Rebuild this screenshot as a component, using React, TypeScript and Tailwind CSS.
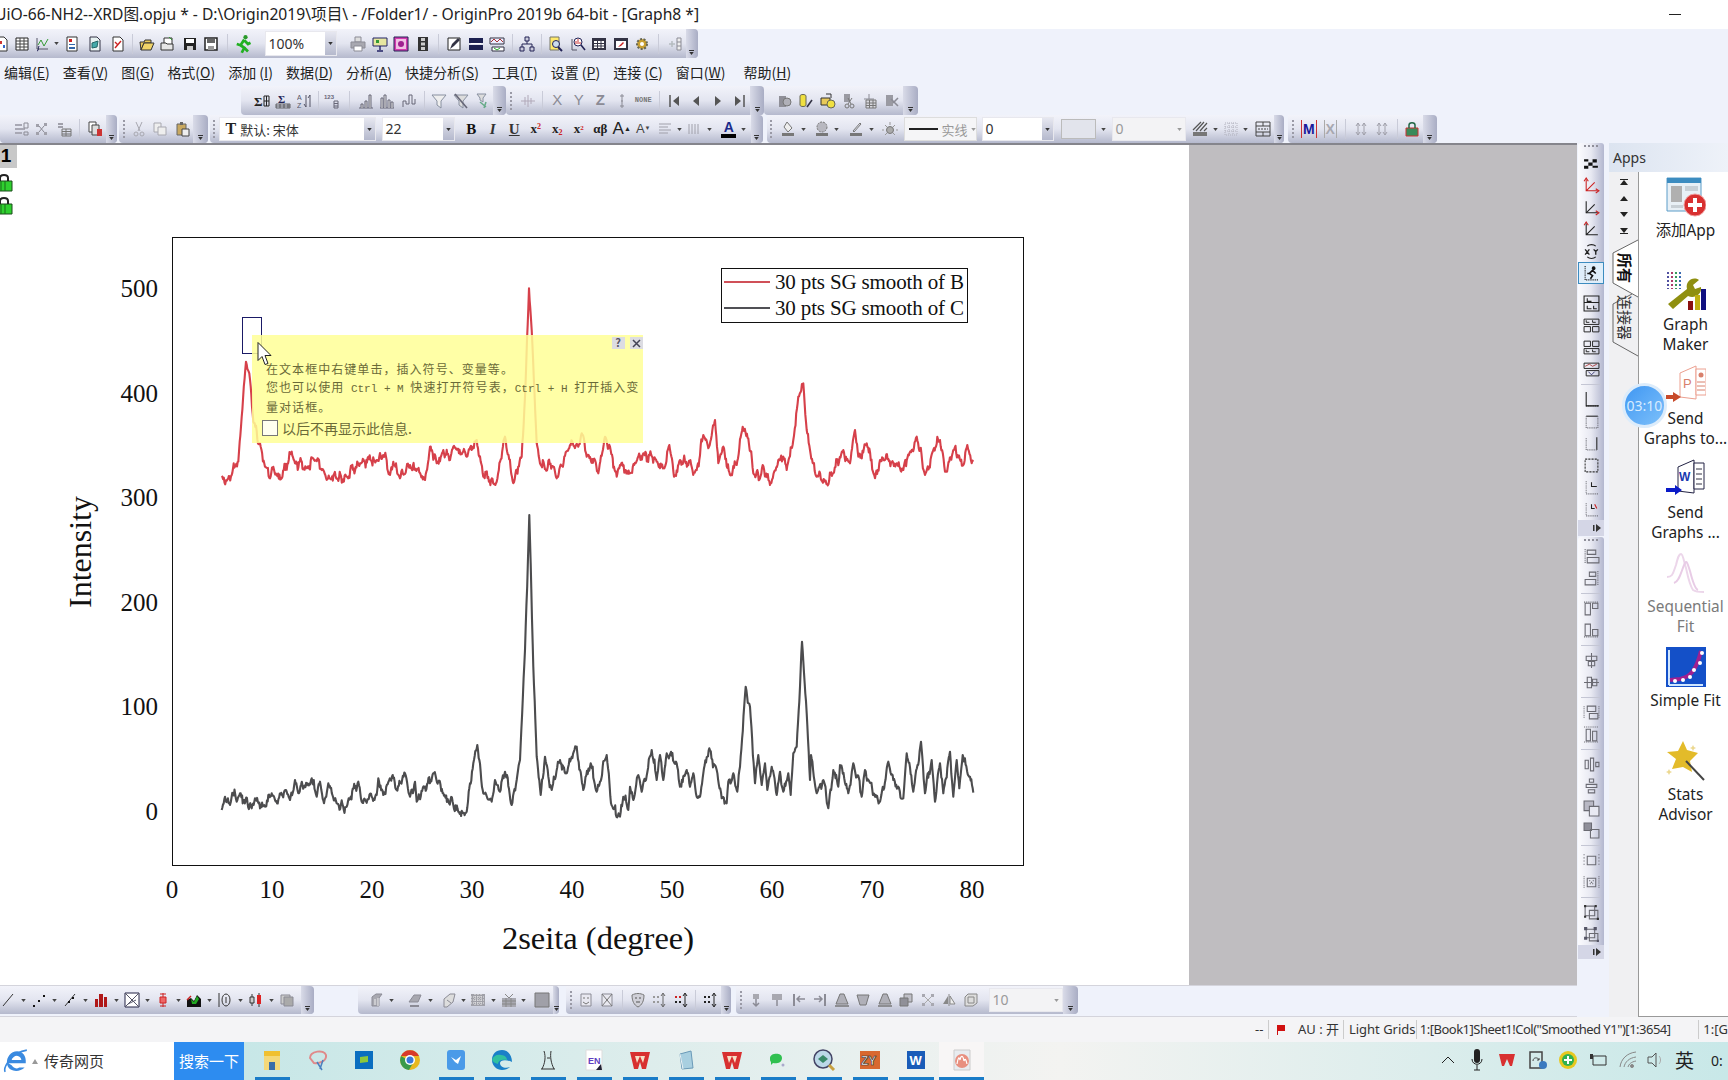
import React from 'react';

// rough trace of the two curves, read off the screenshot (zoomed crop coords)
const redA = [[185,738],[200,752],[215,735],[235,695],[245,560],[258,395],[268,430],[280,575],[300,640],[315,710],[330,745],[340,710],[350,735],[365,745],[395,665],[405,700],[440,715],[460,685],[490,720],[510,745],[560,740],[600,700],[650,690],[670,675],[690,735],[700,695],[720,745],[750,705],[795,750],[810,650],[830,700],[850,660],[870,690],[880,650],[920,680],[950,630],[970,740],[1010,755],[1035,620],[1060,760],[1085,680],[1095,500],[1107,175],[1115,300],[1130,640],[1140,700],[1180,710],[1190,745]];
const redB = [[0,710],[30,645],[55,650],[65,610],[80,680],[105,690],[115,730],[135,620],[150,650],[170,740],[180,705],[210,730],[250,670],[290,695],[315,710],[328,645],[342,740],[360,690],[410,720],[430,615],[445,655],[465,570],[475,700],[490,650],[510,735],[530,705],[548,590],[565,625],[580,730],[600,745],[608,705],[630,765],[655,690],[670,680],[680,720],[700,630],[715,500],[730,460],[740,600],[750,660],[770,740],[795,755],[820,730],[850,660],[870,700],[885,600],[895,680],[920,640],[945,745],[960,690],[1010,700],[1030,720],[1070,620],[1095,735],[1120,660],[1140,630],[1155,725],[1180,660],[1210,705],[1222,645],[1235,700],[1240,695]];
const blackA = [[65,930],[75,890],[90,915],[97,878],[110,905],[120,880],[155,925],[165,895],[195,920],[215,880],[225,900],[260,875],[270,900],[285,840],[295,880],[335,835],[350,890],[360,845],[372,910],[385,850],[410,910],[440,920],[475,845],[485,905],[530,885],[535,835],[550,885],[578,825],[590,870],[615,820],[630,890],[645,845],[650,905],[700,820],[730,880],[775,935],[800,935],[820,790],[832,735],[850,880],[875,905],[885,840],[900,875],[915,815],[935,915],[950,840],[960,780],[975,450],[988,45],[1000,500],[1010,770],[1022,885],[1035,770],[1055,870],[1080,780],[1100,820],[1130,740],[1150,870],[1172,790],[1190,875]];
const blackB = [[0,545],[20,465],[33,610],[60,650],[70,590],[85,630],[90,560],[100,600],[115,525],[125,575],[155,450],[170,540],[180,465],[190,540],[200,460],[230,490],[240,560],[260,510],[270,560],[280,520],[290,590],[300,590],[310,520],[328,445],[350,510],[365,595],[380,610],[385,545],[400,520],[412,575],[420,500],[437,260],[450,320],[465,550],[475,465],[485,555],[495,490],[502,570],[515,500],[530,585],[540,515],[550,575],[565,520],[572,585],[580,460],[590,440],[606,125],[620,340],[630,540],[633,465],[650,580],[670,540],[685,625],[700,510],[715,560],[720,495],[745,580],[760,490],[785,590],[795,510],[825,590],[840,605],[865,485],[880,540],[910,595],[920,460],[940,575],[963,425],[975,580],[995,480],[1005,605],[1020,490],[1030,580],[1050,455],[1060,590],[1070,480],[1078,565],[1088,465],[1110,530],[1120,578]];

const place = (pts: number[][], ox: number, oy: number) => pts.map(([x, y]) => [ox + x / 3, oy + y / 3]);

const curve = (pts: number[][], seed: number) => {
  let s = seed;
  const rnd = () => {
    s = (s * 9301 + 49297) % 233280;
    return s / 233280 - 0.5;
  };
  let d = `M${pts[0][0]} ${pts[0][1]}`;
  let px = 0;
  for (let i = 1; i < pts.length; i++) {
    const [x0, y0] = pts[i - 1];
    const [x1, y1] = pts[i];
    const n = Math.max(1, Math.round((x1 - x0) / 0.7));
    for (let k = 1; k <= n; k++) {
      const t = k / n;
      px += 0.7;
      // noise fades out at the traced points so the peak heights stay put
      const fade = Math.min(1, Math.min(k, n - k) / 3);
      const wob = Math.sin(px * 1.1 + seed) * 3 + Math.sin(px * 0.37) * 2;
      const y = y0 + (y1 - y0) * t + (wob + rnd() * 7) * fade;
      d += `L${(x0 + (x1 - x0) * t).toFixed(1)} ${y.toFixed(1)}`;
    }
  }
  return d;
};

const redPath = curve([...place(redA, 160, 230), ...place(redB, 560, 230)], 17);
const blackPath = curve([...place(blackA, 200, 500), ...place(blackB, 600, 600)], 91);

const Svg = ({ children, c = 'h-4 w-4' }: { children: React.ReactNode; c?: string }) => (
  <svg viewBox="0 0 16 16" className={c} fill="none" strokeWidth="1">{children}</svg>
);

const gray = '#8b8b95';

const G: Record<string, React.ReactNode> = {
  doc: <Svg><path d="M3 1h7l3 3v11H3z" fill="#fff" stroke="#333" /><path d="M5 5h3v3H5z" fill="#c33" /><path d="M9 9h2v3H9z" fill="#36c" /></Svg>,
  sheet: <Svg><path d="M2 2h12v12H2z" fill="#fff" stroke="#222" /><path d="M2 5h12M2 8h12M2 11h12M6 2v12M10 2v12" stroke="#444" /></Svg>,
  chartf: <Svg><path d="M3 2v11h11" stroke="#556" /><path d="M4 9l3-5 3 6 4-7" stroke="#393" /><path d="M3 15c2 0 1-4 2-5" stroke="#225" /></Svg>,
  book: <Svg><path d="M3 1h10v14H3z" fill="#fff" stroke="#333" /><path d="M5 3h3v3H5z" fill="#c22" /><path d="M5 8h6v1H5zM5 11h6v2H5z" fill="#36a" /></Svg>,
  note: <Svg><path d="M3 1h7l3 3v11H3z" fill="#e8f2f2" stroke="#334" /><path d="M5 7l6-2-1 6-5 1z" fill="#4aa" stroke="#266" /></Svg>,
  layout: <Svg><path d="M3 1h7l3 3v11H3z" fill="#fff" stroke="#333" /><path d="M5 12l6-7M5 6l3 3" stroke="#c22" strokeWidth="1.4" /></Svg>,
  open: <Svg><path d="M1 6h4l1-2h6v3H5l-3 7z" fill="#e8c95a" stroke="#333" /><path d="M2 14l3-7h10l-3 7z" fill="#f0d468" stroke="#333" /></Svg>,
  folder2: <Svg><path d="M4 2h8v8H4z" fill="#fff" stroke="#333" /><path d="M1 7h5l1 1h6v6H1z" fill="#e6e6e6" stroke="#333" /><path d="M9 1l3 3" stroke="#393" /></Svg>,
  save: <Svg><path d="M2 2h12v12H2z" fill="#222" /><path d="M4 3h8v4H4z" fill="#fff" /><path d="M5 10h6v4H5z" fill="#ccc" /></Svg>,
  saveas: <Svg><path d="M2 2h12v12H2z" fill="#fff" stroke="#222" strokeWidth="1.5" /><path d="M4 3h8v4H4z" fill="#666" /><path d="M5 10h6v4H5z" fill="#999" /></Svg>,
  run: <Svg c="h-5 w-5"><circle cx="10" cy="2.5" r="1.7" fill="#2a9a2a" /><path d="M9 4.5L6 9l3 2-2 4M9 5l3 3 2-1M6 9L3 8M9 11l3 3" stroke="#22b022" strokeWidth="2.2" /></Svg>,
  print: <Svg><path d="M5 1h6v5H5z" fill="#ddd" stroke={gray} /><path d="M1 6h14v6H1z" fill="#a8a8b0" stroke={gray} /><path d="M4 10h8v5H4z" fill="#fff" stroke={gray} /></Svg>,
  screen: <Svg><path d="M1 2h14v8H1z" fill="#e6e6a0" stroke="#226" /><path d="M4 4h3v3H4z" fill="#393" /><path d="M8 10v4M5 15h6" stroke="#226" strokeWidth="1.4" /></Svg>,
  pink: <Svg><path d="M1 1h14v14H1z" fill="#d43ab0" stroke="#225" /><path d="M3 3h10v10H3z" fill="#f0c0e4" /><circle cx="8" cy="8" r="3" fill="#a02090" /></Svg>,
  film: <Svg><path d="M3 1h10v14H3z" fill="#333" /><path d="M6 2h4v3H6zM6 6.500h4v3H6zM6 11h4v3H6z" fill="#ccc" /></Svg>,
  pen: <Svg><path d="M2 2h12v12H2z" fill="#fff" stroke="#222" /><path d="M4 13l2-5 6-6 2 2-6 6z" fill="#334" /></Svg>,
  bars2: <Svg><path d="M1 2h14v5H1zM1 9h14v5H1z" fill="#1c2050" /><path d="M3 7.500h10" stroke="#fff" /></Svg>,
  wins: <Svg><path d="M1 2h14v6H1z" fill="#eef" stroke="#334" /><path d="M3 11h12v4H3z" fill="#fff" stroke="#334" /><path d="M2 6l3-3 3 3 3-3 3 3" stroke="#a33" /><path d="M5 12l3 2 3-2" stroke="#2a2" /></Svg>,
  tree: <Svg><path d="M6 1h4v4H6zM1 11h4v4H1zM11 11h4v4h-4z" fill="#ccd" stroke="#225" /><path d="M8 5v3M3 11V8h10v3" stroke="#225" /></Svg>,
  mag: <Svg><path d="M2 1h9v13H2z" fill="#ffe96a" stroke="#776" /><circle cx="8" cy="8" r="3.500" fill="#cde" stroke="#225" /><path d="M10 11l4 4" stroke="#225" strokeWidth="2" /></Svg>,
  magc: <Svg><path d="M2 14V3M2 14h5" stroke="#556" /><circle cx="8" cy="6" r="4" fill="#fff" stroke="#225" /><path d="M6 8V5M8 8V3M10 8V6" stroke="#c33" /><path d="M11 9l4 5" stroke="#225" strokeWidth="1.6" /></Svg>,
  table: <Svg><path d="M1 2h14v12H1z" fill="#334" /><path d="M3 5h10v7H3z" fill="#fff" /><path d="M3 7.500h10M3 10h10M6.500 5v7M10 5v7" stroke="#334" /></Svg>,
  tablep: <Svg><path d="M1 2h14v12H1z" fill="#334" /><path d="M3 5h10v7H3z" fill="#fff" /><path d="M5 11l2-2 3-3 1 1-3 3z" fill="#c22" /></Svg>,
  gear: <Svg><circle cx="8" cy="8" r="5" fill="#c9a030" stroke="#665" strokeWidth="2" strokeDasharray="2 1.500" /><circle cx="8" cy="8" r="2" fill="#fff" /></Svg>,
  addcol: <Svg><path d="M10 2h4v12h-4z" fill="#eee" stroke={gray} /><path d="M10 6h4M10 10h4" stroke={gray} /><path d="M2 8h6M5 5v6" stroke="#b5bcc0" strokeWidth="1.5" /></Svg>,
  sigmac: <Svg><text x="0" y="13" fontFamily="Liberation Serif" fontSize="13" fontWeight="700" fill="#222">Σ</text><path d="M10 3h5v10h-5zM10 8h5M12.500 3v10" stroke="#222" /></Svg>,
  sigmau: <Svg><text x="3" y="10" fontFamily="Liberation Serif" fontSize="11" fontWeight="700" fill="#225">Σ</text><path d="M1 11h14v4H1zM1 13h14M5 11v4M9 11v4M13 11v4" stroke="#333" strokeWidth=".7" /></Svg>,
  sort: <Svg><text x="0" y="7" fontFamily="Liberation Sans" fontSize="7" fill="#556">A</text><text x="0" y="15" fontFamily="Liberation Sans" fontSize="7" fill="#556">Z</text><path d="M9 2v12M9 14l-2-3M13 14V2M13 2l-2 3" stroke="#556" /></Svg>,
  n123: <Svg><text x="0" y="6" fontFamily="Liberation Sans" fontSize="6" fontWeight="700" fill="#667">123</text><path d="M10 8h4v7h-4zM10 10.500h4M10 13h4" stroke="#667" /></Svg>,
  bar: <Svg><path d="M1 15h14" stroke="#667" /><path d="M3 15v-4h2v4M7 15V8h2v7M11 15V2h2v13" stroke="#667" fill="#ddd" /></Svg>,
  bars: <Svg><path d="M1 15h14" stroke="#667" /><path d="M2 15V5h2v10M5 15V2h2v13M9 15V7h2v8M12 15V9h2v6" stroke="#667" fill="#eee" /></Svg>,
  steps: <Svg><path d="M2 14V8h3v3h3V2h3v9h3V6" stroke="#667" /></Svg>,
  fun: <Svg><path d="M1 2h14l-5 6v7l-4-3V8z" fill="#eee" stroke="#8890a0" /></Svg>,
  funx: <Svg><path d="M1 2h14l-5 6v7l-4-3V8z" fill="#ddd" stroke="#8890a0" /><path d="M2 1l12 14" stroke="#667" strokeWidth="1.6" /></Svg>,
  funy: <Svg><path d="M3 1h9l-3 4v4l-3-2V5z" fill="#ddd" stroke="#8890a0" /><path d="M6 9l6 5M12 9l-2 6" stroke="#6a8" strokeWidth="1.5" /></Svg>,
  spark: <Svg><path d="M1 8h14M5 4v8M8 2v12M11 5v6" stroke="#b0a8b8" /></Svg>,
  X: <span className="font-['Liberation_Sans',sans-serif] text-[15px] text-[#8b8b95]">X</span>,
  Y: <span className="font-['Liberation_Sans',sans-serif] text-[15px] text-[#8b8b95]">Y</span>,
  Z: <span className="font-['Liberation_Sans',sans-serif] text-[15px] font-bold text-[#8b8b95]">Z</span>,
  ibar: <Svg><path d="M8 1v14M6 3h4M6 13h4M7 8h2" stroke="#8b8b95" /></Svg>,
  none: <span className="font-['Liberation_Mono',monospace] text-[7px] font-bold text-[#777]">NONE</span>,
  first: <Svg><path d="M3 2v12" stroke="#555" strokeWidth="1.500" /><path d="M12 3v10L6 8z" fill="#555" /></Svg>,
  prev: <Svg><path d="M11 3v10L5 8z" fill="#555" /></Svg>,
  next: <Svg><path d="M5 3v10l6-5z" fill="#555" /></Svg>,
  last: <Svg><path d="M13 2v12" stroke="#555" strokeWidth="1.500" /><path d="M4 3v10l6-5z" fill="#555" /></Svg>,
  cyl: <Svg><path d="M2 3h7v11H2z" fill="#8f8f98" /><circle cx="10" cy="9" r="4" fill="#b0b0b8" stroke="#777" /></Svg>,
  cyly: <Svg><path d="M2 3c0-2 6-2 6 0v9c0 2-6 2-6 0z" fill="#f0e040" stroke="#665" /><path d="M9 14l5-7" stroke="#334" strokeWidth="1.600" /></Svg>,
  openy: <Svg><path d="M1 5h9v7H1z" fill="#e8c95a" stroke="#333" /><circle cx="11" cy="11" r="4" fill="#f0e040" stroke="#665" /><path d="M6 1h5v4" stroke="#333" /></Svg>,
  sci: <Svg><path d="M3 1h6v8H3z" fill="#9a9aa2" /><circle cx="6" cy="13" r="2" stroke="#777" /><circle cx="11" cy="13" r="2" stroke="#777" /><path d="M7 11l4-6M10 11L7 5" stroke="#777" /></Svg>,
  grid2: <Svg><path d="M6 1v5M1 6h10" stroke="#8b8b95" /><path d="M3 7h10v8H3z" fill="#d8d8de" stroke="#777" /><path d="M3 10h10M3 12.500h10M6.500 7v8M10 7v8" stroke="#777" /></Svg>,
  cyl3: <Svg><path d="M2 2h7v11H2z" fill="#9a9aa2" /><path d="M7 6l7 7M14 5l-5 5" stroke="#8b8b95" strokeWidth="1.600" /></Svg>,
  g1: <Svg><path d="M2 3h7v2H2zM2 7h10v2H2zM2 11h7v2H2z" fill="#a8a8b4" /><path d="M11 2h4v5h-4z" stroke="#8b8b95" /><path d="M11 11h4v3h-4z" stroke="#8b8b95" /></Svg>,
  g2: <Svg><path d="M2 3h3v3H2zM10 2h3v3h-3zM2 11h3v3H2zM10 11h3v3h-3z" fill="#a0a0aa" /><path d="M5 5l5 6M10 5l-5 6" stroke="#8b8b95" /></Svg>,
  g3: <Svg><path d="M2 2h5v2H2zM2 5h5v2H2z" fill="#a0a0aa" /><path d="M6 8h9v7H6zM6 10.500h9M6 13h9M10 8v7" stroke="#777" /></Svg>,
  copyr: <Svg><path d="M2 1h7v10H2z" fill="#fff" stroke="#444" /><path d="M5 4h7v10H5z" fill="#ddd" stroke="#444" /><path d="M10 8h5v7h-5z" fill="#c33" /></Svg>,
  cut: <Svg><path d="M5 1l4 9M11 1l-4 9" stroke="#a8a8b0" /><circle cx="5" cy="13" r="2" stroke="#a8a8b0" /><circle cx="11" cy="13" r="2" stroke="#a8a8b0" /></Svg>,
  copy: <Svg><path d="M2 2h7v9H2z" fill="#eee" stroke="#a8a8b0" /><path d="M6 6h8v8H6z" fill="#eee" stroke="#a8a8b0" /></Svg>,
  paste: <Svg><path d="M3 3h9v11H3z" fill="#c8a860" stroke="#666" /><path d="M6 1h3v3H6z" fill="#666" /><path d="M8 8h7v7H8z" fill="#eee" stroke="#444" /></Svg>,
  B: <span className="font-['Liberation_Serif',serif] text-[15px] font-bold text-[#111]">B</span>,
  I: <span className="font-['Liberation_Serif',serif] text-[15px] font-bold italic text-[#333]">I</span>,
  U: <span className="font-['Liberation_Serif',serif] text-[15px] font-bold text-[#333] underline">U</span>,
  sup: <span className="font-['Liberation_Serif',serif] text-[13px] font-bold text-[#222]">x<sup className="text-[8px] text-[#c22]">2</sup></span>,
  sub: <span className="font-['Liberation_Serif',serif] text-[13px] font-bold text-[#222]">x<sub className="text-[8px] text-[#c22]">2</sub></span>,
  supsub: <span className="font-['Liberation_Serif',serif] text-[13px] font-bold text-[#222]">x<sup className="text-[7px] text-[#c22]">2</sup></span>,
  ab: <span className="font-['Liberation_Serif',serif] text-[13px] font-bold text-[#222]">αβ</span>,
  Aup: <span className="font-['Liberation_Sans',sans-serif] text-[17px] text-[#222]">A<sup className="text-[7px]">▲</sup></span>,
  Adn: <span className="font-['Liberation_Sans',sans-serif] text-[13px] text-[#444]">A<sup className="text-[6px]">▼</sup></span>,
  align: <Svg><path d="M2 3h12M2 6h9M2 9h12M2 12h9" stroke="#a0a0aa" /></Svg>,
  vline: <Svg><path d="M3 3v10M6 3v10M9 3v10M12 3v10" stroke="#a0a0aa" /></Svg>,
  Acol: <span className="relative flex flex-col items-center font-['Liberation_Sans',sans-serif] text-[14px] font-bold leading-[14px] text-[#1a2a8a]">A<span className="h-[4px] w-[15px] bg-black" /></span>,
  fill: <Svg><path d="M7 1l5 6-4 4-4-5z" fill="#eee" stroke="#777" /><path d="M2 12h12v3H2z" fill="#777" /></Svg>,
  pat: <Svg><circle cx="8" cy="6" r="5" fill="#b8b8c0" stroke="#777" strokeDasharray="2 1" /><path d="M2 12h12v3H2z" fill="#777" /></Svg>,
  penc: <Svg><path d="M5 10l7-8 1 1-7 8z" stroke="#777" /><path d="M2 12h12v3H2z" fill="#777" /></Svg>,
  bulb: <Svg><circle cx="8" cy="9" r="3.500" fill="#aaa" stroke="#777" /><path d="M8 1v3M2 9H0M16 9h-2M3 4l2 2M13 4l-2 2M3 14l2-2M13 14l-2-2" stroke="#999" /></Svg>,
  hatch: <Svg><path d="M1 9l8-8M4 10l8-9M8 10l7-8M12 10l3-3" stroke="#555" strokeWidth="1.200" /><path d="M1 11h14v4H1z" fill="#777" /></Svg>,
  gridd: <Svg><path d="M2 2h12v12H2zM2 6h12M2 10h12M6 2v12M10 2v12" stroke="#b0b0bc" strokeDasharray="1 1" /></Svg>,
  arrows: <Svg><path d="M1 1h14v14H1zM1 5h14M1 11h14M8 1v4M8 11v4" stroke="#444" /><path d="M3 8h10" stroke="#444" strokeDasharray="2 1" /></Svg>,
  M: <span className="border-x border-[#c33] px-[1px] font-['Liberation_Sans',sans-serif] text-[14px] leading-[18px] font-bold text-[#1a1a9a]">M</span>,
  Xg: <span className="border-x border-[#aaa] px-[1px] font-['Liberation_Sans',sans-serif] text-[14px] leading-[18px] font-bold text-[#a8a8b0]">X</span>,
  ud1: <Svg><path d="M5 2v12M11 2v12M3 5l2-3 2 3M3 11l2 3 2-3M9 5l2-3 2 3M9 11l2 3 2-3" stroke="#a0a0aa" /></Svg>,
  lock: <Svg><path d="M2 7h12v8H2z" fill="#3a8a5a" stroke="#c33" /><path d="M5 7V4c0-3 6-3 6 0v3" stroke="#264" strokeWidth="1.500" /></Svg>,
  line: <Svg><path d="M3 14L13 2" stroke="#333" /></Svg>,
  dots: <Svg><path d="M2 13h2v2H2zM7 8h2v2H7zM12 3h2v2h-2z" fill="#111" /></Svg>,
  dline: <Svg><path d="M3 14L13 2" stroke="#333" /><path d="M6 9h2v2H6zM10 5h2v2h-2z" fill="#111" /></Svg>,
  rbar: <Svg><path d="M2 7h3v8H2zM6 2h4v13H6zM11 5h3v10h-3z" fill="#b01818" /></Svg>,
  xbox: <Svg><path d="M1 1h14v14H1z" fill="#fff" stroke="#224" /><path d="M1 1l14 14M15 1L1 15M4 12l8-4" stroke="#556" /></Svg>,
  err: <Svg><path d="M8 1v14" stroke="#c22" /><path d="M5 2h6M5 14h6" stroke="#c22" /><path d="M5 5h6v6H5z" fill="#e66" stroke="#c22" /></Svg>,
  area: <Svg><path d="M1 15V8l4-2 3 3 3-6 4 4v8z" fill="#111" /><path d="M5 7l3 3 3-6 2 3-3 5H6z" fill="#2a2" /><path d="M1 8l4-4" stroke="#c22" strokeWidth="1.500" /></Svg>,
  box0: <Svg><path d="M2 1v14" stroke="#333" /><ellipse cx="9" cy="8" rx="4" ry="6" stroke="#333" /><path d="M9 5v6" stroke="#333" /></Svg>,
  candle: <Svg><path d="M4 2v12M11 1v14" stroke="#333" /><path d="M2 5h4v6H2z" fill="#ccc" stroke="#333" /><path d="M9 3h4v9H9z" fill="#d22" /></Svg>,
  cube: <Svg><path d="M2 3h9v9H2z" fill="#ccc" stroke={gray} /><path d="M5 5h9v9H5z" fill="#aaa" stroke={gray} /></Svg>,
  gbar: <Svg><path d="M3 5l4-3h6l-3 4v8H3z" fill="#a8a8b0" stroke={gray} /><path d="M6 7v6M9 6v8" stroke="#eee" /></Svg>,
  glayer: <Svg><path d="M2 10l5-7h7l-3 7z" fill="#a8a8b0" stroke={gray} /><path d="M3 14h9" stroke={gray} strokeWidth="2" /></Svg>,
  gdia: <Svg><path d="M3 7l6-5h5l-2 8-6 5H3z" fill="#ddd" stroke={gray} /><path d="M6 8l4 3" stroke={gray} /></Svg>,
  gmat: <Svg><path d="M1 2h14v12H1z" fill="#a0a0a8" /><path d="M1 5h14M1 8h14M1 11h14M5 2v12M8 2v12M11 2v12" stroke="#eee" strokeDasharray="1 1" /></Svg>,
  gmat2: <Svg><path d="M1 6h14v9H1z" fill="#a8a8b0" /><path d="M4 2l4 4 4-4M1 9h14M1 12h14M5 6v9M10 6v9" stroke="#888" /></Svg>,
  gsq: <Svg><path d="M1 1h14v14H1z" fill="#a0a0a8" stroke="#777" /></Svg>,
  face: <Svg><path d="M3 2h10v12H3z" fill="#e8e8f0" stroke={gray} /><path d="M5 6h2M9 6h2M5 10l3 2 3-2" stroke="#777" /></Svg>,
  facex: <Svg><path d="M3 2h10v12H3z" fill="#e8e8f0" stroke={gray} /><path d="M3 2l10 12M13 2L3 14" stroke="#777" /></Svg>,
  shield: <Svg><path d="M2 3c4-2 8-2 12 0 0 6-2 10-6 12-4-2-6-6-6-12z" fill="#d0d0d8" stroke="#777" /><path d="M5 6h2M9 6h2M6 10h4" stroke="#555" /></Svg>,
  ddots: <Svg><path d="M2 4h2v2H2zM6 4h2v2H6zM2 9h2v2H2zM6 9h2v2H6z" fill="#999" /><path d="M12 2v12M10 4l2-3 2 3M10 12l2 3 2-3" stroke="#666" /></Svg>,
  rdots: <Svg><path d="M2 4h2v2H2zM6 4h2v2H6z" fill="#c22" /><path d="M2 9h2v2H2zM6 9h2v2H6z" fill="#222" /><path d="M12 2v12M10 4l2-3 2 3M10 12l2 3 2-3" stroke="#222" /></Svg>,
  bdots: <Svg><path d="M2 4h2v2H2zM6 4h2v2H6zM2 9h2v2H2zM6 9h2v2H6z" fill="#222" /><path d="M12 2v12M10 4l2-3 2 3M10 12l2 3 2-3" stroke="#222" /></Svg>,
  a1: <Svg><path d="M5 2h6v5H5z" fill="#a8a8b0" /><path d="M8 7v7M5 11l3 3 3-3" stroke={gray} strokeWidth="1.500" /></Svg>,
  a2: <Svg><path d="M3 2h10v6H3z" fill="#a8a8b0" /><path d="M8 8v6" stroke={gray} strokeWidth="1.500" /></Svg>,
  a3: <Svg><path d="M3 2v12" stroke={gray} strokeWidth="2" /><path d="M14 7H6M9 4L6 7l3 3" stroke={gray} strokeWidth="1.500" /></Svg>,
  a4: <Svg><path d="M13 2v12" stroke={gray} strokeWidth="2" /><path d="M2 7h8M7 4l3 3-3 3" stroke={gray} strokeWidth="1.500" /></Svg>,
  trap: <Svg><path d="M6 2h4l4 10H2z" fill="#b0b0b8" stroke="#777" /><path d="M1 14h14" stroke="#777" strokeWidth="1.500" /></Svg>,
  trapd: <Svg><path d="M2 3h12l-3 10H5z" fill="#b0b0b8" stroke="#777" /></Svg>,
  layers: <Svg><path d="M6 2h8v8H6z" fill="#c0c0c8" stroke="#777" /><path d="M2 6h8v8H2z" fill="#909098" stroke="#777" /></Svg>,
  fit: <Svg><path d="M2 2h3v3H2zM11 2h3v3h-3zM2 11h3v3H2zM11 11h3v3h-3z" fill="#a8a8b0" /><path d="M5 5l6 6M11 5l-6 6" stroke="#aaa" /></Svg>,
  flip: <Svg><path d="M8 2v12" stroke="#888" /><path d="M7 4L2 12h5z" fill="#888" /><path d="M9 4l5 8H9z" fill="#eee" stroke="#888" /></Svg>,
  cube2: <Svg><path d="M5 2h9v9l-4 3H2V5z" fill="#ddd" stroke="#888" /><path d="M5 5h6v6H5z" stroke="#888" /></Svg>,
};

const I = ({ n, c = '', w = 'w-[21.5px]' }: { n: string; c?: string; w?: string }) => (
  <div className={`flex h-full shrink-0 items-center justify-center ${w} ${c}`}>{G[n]}</div>
);

const Dd = ({ c = '', w = 'w-[8px]' }: { c?: string; w?: string }) => (
  <div className={`flex h-full shrink-0 items-center justify-center ${w} ${c}`}>
    <svg viewBox="0 0 6 4" className="h-[3px] w-[5px]"><path d="M0 0h6L3 4z" fill="#444" /></svg>
  </div>
);

const Sep = ({ c = '' }: { c?: string }) => (
  <div className={`flex h-full shrink-0 items-center justify-center ${c}`}>
    <div className="h-[20px] w-px bg-[#c9cbd8]" />
  </div>
);

const Grip = () => (
  <div className="flex h-full w-[9px] shrink-0 items-center justify-center">
    <div className="h-[18px] border-l-2 border-dotted border-[#9a9aa6]" />
  </div>
);

// the chevron tab at the end of each toolbar
const End = ({ c = '' }: { c?: string }) => (
  <div className={`flex h-full shrink-0 flex-col items-center justify-end rounded-r-[4px] bg-linear-to-r from-[#d9dbe8] to-[#a9adc4] pb-[3px] ${c}`}>
    <div className="mb-[1px] h-px w-[5px] bg-[#333]" />
    <svg viewBox="0 0 6 4" className="h-[3px] w-[5px]"><path d="M0 0h6L3 4z" fill="#333" /></svg>
  </div>
);

const Bar = ({ children, c = '' }: { children: React.ReactNode; c?: string }) => (
  <div className={`flex h-full shrink-0 items-stretch rounded-b-[4px] bg-linear-to-b from-[#f2f3fa] via-[#e3e5f0] to-[#b5b9cd] ${c}`}>{children}</div>
);

const Combo = ({ children, c = '', off = false }: { children: React.ReactNode; c?: string; off?: boolean }) => (
  <div className={`my-[2px] flex shrink-0 items-center justify-between border border-[#e8e8ee] text-[14px] leading-none font-['Noto_Sans',sans-serif] ${off ? 'bg-[#f3f3f5] text-[#9a9a9a]' : 'bg-white text-[#333]'} ${c}`}>
    <div className="flex items-center pl-[2px] whitespace-nowrap">{children}</div>
    <div className={`flex h-full w-[11px] items-center justify-center ${off ? '' : 'bg-linear-to-b from-[#e6e7f0] to-[#b5b9cd]'}`}>
      <svg viewBox="0 0 6 4" className="h-[3px] w-[5px]"><path d="M0 0h6L3 4z" fill={off ? '#999' : '#333'} /></svg>
    </div>
  </div>
);

const menus: [string, string, string][] = [
  ['编辑(', 'E', ')'], ['查看(', 'V', ')'], ['图(', 'G', ')'], ['格式(', 'O', ')'], ['添加 (', 'I', ')'], ['数据(', 'D', ')'],
  ['分析(', 'A', ')'], ['快捷分析(', 'S', ')'], ['工具(', 'T', ')'], ['设置 (', 'P', ')'], ['连接 (', 'C', ')'], ['窗口(', 'W', ')'], ['帮助(', 'H', ')'],
];

const Top = () => (
  <div className="flex h-[114px] flex-col bg-[#eff2fb]">
    <div className="-ml-[8px] flex h-[29px]">
      <Bar>
        <I n="doc" w="w-[20px]" /><I n="sheet" w="w-[20px]" /><I n="chartf" w="w-[20px]" /><Dd />
        <I n="book" w="w-[23px]" /><I n="note" w="w-[23px]" /><I n="layout" w="w-[23px]" />
        <Sep c="w-[7px]" />
        <I n="open" /><I n="folder2" /><I n="save" /><I n="saveas" />
        <Sep c="w-[10px]" />
        <I n="run" />
        <Combo c="ml-[11px] w-[72px]"><span className="pl-[1px]">100%</span></Combo>
        <I n="print" c="ml-[11px]" /><I n="screen" /><I n="pink" /><I n="film" />
        <Sep c="w-[10px]" />
        <I n="pen" /><I n="bars2" /><I n="wins" />
        <Sep c="w-[8px]" />
        <I n="tree" />
        <Sep c="w-[8px]" />
        <I n="mag" /><I n="magc" /><I n="table" /><I n="tablep" /><I n="gear" />
        <Sep c="w-[11px]" />
        <I n="addcol" />
        <End c="w-[12px]" />
      </Bar>
    </div>
    <div className="flex h-[28px] items-center gap-[13px] pl-[4px] text-[14px] text-[#222] font-['Noto_Sans_CJK_SC',sans-serif]">
      {menus.map(([a, k, b]) => (
        <span key={k} className={k === 'H' ? 'ml-[5px]' : ''}>{a}<span className="underline">{k}</span>{b}</span>
      ))}
    </div>
    <div className="flex h-[29px] pl-[241px]">
      <Bar>
        <div className="w-[10px]" />
        <I n="sigmac" /><I n="sigmau" /><I n="sort" />
        <Sep c="w-[6px]" />
        <I n="n123" />
        <Sep c="w-[12px]" />
        <I n="bar" /><I n="bars" /><I n="steps" />
        <Sep c="w-[9px]" />
        <I n="fun" /><I n="funx" /><I n="funy" />
        <End c="w-[13px]" />
      </Bar>
      <Bar>
        <Grip />
        <div className="w-[2px]" />
        <I n="spark" />
        <Sep c="w-[8px]" />
        <I n="X" /><I n="Y" /><I n="Z" /><I n="ibar" /><I n="none" />
        <Sep c="w-[10px]" />
        <I n="first" /><I n="prev" /><I n="next" /><I n="last" />
        <End c="w-[14px]" />
      </Bar>
      <Bar>
        <div className="w-[10px]" />
        <I n="cyl" /><I n="cyly" /><I n="openy" /><I n="sci" /><I n="grid2" /><I n="cyl3" />
        <End c="w-[15px]" />
      </Bar>
    </div>
    <div className="flex h-[28px]">
      <Bar>
        <div className="w-[10px]" />
        <I n="g1" /><I n="g2" /><I n="g3" />
        <Sep c="w-[10px]" />
        <I n="copyr" />
        <End c="w-[11px]" />
      </Bar>
      <Bar c="ml-[2px]">
        <Grip />
        <I n="cut" /><I n="copy" /><I n="paste" />
        <End c="w-[15px]" />
      </Bar>
      <Bar c="ml-[2px]">
        <Grip />
        <Combo c="w-[157px] !text-[13px] font-['Noto_Sans_CJK_SC',sans-serif]">
          <span className="mr-[4px] ml-[4px] font-['Liberation_Serif',serif] text-[16px] font-bold text-[#222]">T</span>默认: 宋体
        </Combo>
        <Combo c="ml-[6px] w-[73px]"><span className="pl-[1px]">22</span></Combo>
        <div className="w-[6px]" />
        <I n="B" /><I n="I" /><I n="U" /><I n="sup" /><I n="sub" /><I n="supsub" /><I n="ab" /><I n="Aup" /><I n="Adn" />
        <I n="align" /><Dd />
        <I n="vline" /><Dd />
        <I n="Acol" c="ml-[5px]" /><Dd />
        <End c="ml-[3px] w-[12px]" />
      </Bar>
      <Bar c="ml-[4px]">
        <Grip />
        <div className="w-[2px]" />
        <I n="fill" /><Dd />
        <I n="pat" c="ml-[4px]" /><Dd />
        <I n="penc" c="ml-[5px]" /><Dd />
        <I n="bulb" c="ml-[4px]" />
        <div className="my-[2px] ml-[3px] flex w-[73px] shrink-0 items-center whitespace-nowrap border border-[#ddd] bg-[#f5f5f7] pl-[4px]">
          <div className="h-[2px] w-[29px] bg-[#222]" />
          <span className="ml-[4px] text-[13px] leading-none text-[#999] font-['Noto_Sans_CJK_SC',sans-serif]">实线</span>
          <svg viewBox="0 0 6 4" className="ml-[3px] h-[3px] w-[5px]"><path d="M0 0h6L3 4z" fill="#999" /></svg>
        </div>
        <Combo c="ml-[5px] w-[72px]"><span className="pl-[1px]">0</span></Combo>
        <div className="my-[4px] ml-[7px] w-[35px] shrink-0 border border-[#bbb] bg-[#e2e4ec]" />
        <Dd c="ml-[4px]" />
        <Combo off c="ml-[4px] w-[74px]"><span className="pl-[1px]">0</span></Combo>
        <I n="hatch" c="ml-[4px]" /><Dd />
        <I n="gridd" c="ml-[1px]" /><Dd />
        <I n="arrows" c="ml-[3px]" />
        <End c="w-[10px]" />
      </Bar>
      <Bar c="ml-[4px]">
        <Grip />
        <div className="w-[1px]" />
        <I n="M" /><I n="Xg" />
        <Sep c="w-[9px]" />
        <I n="ud1" /><I n="ud1" />
        <Sep c="w-[8px]" />
        <I n="lock" />
        <End c="w-[14px]" />
      </Bar>
    </div>
  </div>
);

const Chart = () => (
  <svg viewBox="0 145 1189 840" className="block h-[840px] w-[1189px]">
    <rect x="172.500" y="237.500" width="851" height="628" fill="none" stroke="#111" />
    <path d={redPath} fill="none" stroke="#d6404a" strokeWidth="2.100" strokeLinejoin="round" />
    <path d={blackPath} fill="none" stroke="#4c4c4e" strokeWidth="2.100" strokeLinejoin="round" />
    <g fontFamily="Liberation Serif, serif" fontSize="25" fill="#111">
      {[[0, 811], [100, 706], [200, 602], [300, 497], [400, 393], [500, 288]].map(([v, y]) => (
        <text key={v} x="158" y={y + 9} textAnchor="end">{v}</text>
      ))}
      {[0, 10, 20, 30, 40, 50, 60, 70, 80].map((v) => (
        <text key={v} x={172 + v * 10} y="898" textAnchor="middle">{v}</text>
      ))}
    </g>
    <text x="0" y="0" transform="translate(91 608) rotate(-90)" fontFamily="Liberation Serif, serif" fontSize="32" fill="#111">Intensity</text>
    <text x="598" y="949" textAnchor="middle" fontFamily="Liberation Serif, serif" fontSize="32.500" fill="#111">2seita (degree)</text>
    <rect x="721.500" y="268.500" width="246" height="54" fill="#fff" stroke="#111" />
    <path d="M724 282h46" stroke="#d05058" strokeWidth="1.800" />
    <path d="M724 308h46" stroke="#505055" strokeWidth="1.800" />
    <g fontFamily="Liberation Serif, serif" fontSize="21" fill="#111" letterSpacing="-.15">
      <text x="775" y="289">30 pts SG smooth of B</text>
      <text x="775" y="315">30 pts SG smooth of C</text>
    </g>
    <rect x="242.500" y="317.500" width="19" height="36" fill="none" stroke="#1a1a66" />
  </svg>
);

const Mono = ({ children }: { children: React.ReactNode }) => (
  <span className="text-[11px] tracking-normal font-['Liberation_Mono',monospace]">{children}</span>
);

const Hint = () => (
  <div className="absolute top-[190px] left-[252px] h-[108px] w-[391px] bg-[#ffff96]/85 pt-[25px] pl-[14px] text-[12px] leading-[17.5px] tracking-[1.05px] text-[#6a6a38] font-['Noto_Sans_CJK_SC',sans-serif]">
    <div className="absolute top-[2px] right-[18px] flex h-[12px] w-[13px] items-center justify-center bg-[#dcdce2] text-[11px] font-bold text-[#556]">?</div>
    <div className="absolute top-[2px] right-0 flex h-[12px] w-[13px] items-center justify-center bg-[#dcdce2] text-[12px] font-bold text-[#445]">
      <svg viewBox="0 0 9 9" className="h-[9px] w-[9px]"><path d="M1 1l7 7M8 1L1 8" stroke="#445" strokeWidth="1.500" /></svg>
    </div>
    <div className="whitespace-pre">在文本框中右键单击，插入符号、变量等。</div>
    <div className="whitespace-pre">您也可以使用<Mono> Ctrl + M </Mono>快速打开符号表，<Mono>Ctrl + H </Mono>打开插入变</div>
    <div className="whitespace-pre">量对话框。</div>
    <div className="mt-[4px] -ml-[4px] flex items-center gap-[4px] text-[14px] tracking-normal">
      <div className="h-[16px] w-[16px] border border-[#777] bg-[#fffff0]" />
      以后不再显示此信息.
    </div>
  </div>
);

const Canvas = () => (
  <div className="relative h-[840px] w-[1189px] shrink-0 bg-white">
    <Chart />
    <Hint />
    <svg viewBox="0 0 15 24" className="absolute top-[196px] left-[257px] h-[25px] w-[15px]">
      <path d="M1 1v18l4-4 3 8 3-1-3-8h6z" fill="#fff" stroke="#222" />
    </svg>
    <div className="absolute top-0 left-0 flex h-[23px] w-[17px] items-center justify-center bg-[#c8c8c8] text-[19px] font-bold font-['Liberation_Sans',sans-serif]">
      <span className="-ml-[5px]">1</span>
    </div>
    {['top-[29px]', 'top-[52px]'].map((t) => (
      <svg key={t} viewBox="0 0 18 18" className={`absolute -left-[5px] h-[18px] w-[18px] ${t}`}>
        <path d="M1 7h16v10H1z" fill="#2fd02f" stroke="#1a4a1a" />
        <path d="M5 7V4c0-4 8-4 8 0v3" fill="none" stroke="#222" strokeWidth="2" />
        <path d="M6 7v10M10 7v10" stroke="#1a6a1a" />
      </svg>
    ))}
  </div>
);

const BottomBar = () => (
  <div className="flex h-[32px] border-y border-[#d4d4dc] bg-[#eff2fb] pb-[2px]">
    <Bar c="-ml-[3px] w-[317px]">
      <I n="line" /><Dd w="w-[9.5px]" /><I n="dots" /><Dd w="w-[9.5px]" /><I n="dline" /><Dd w="w-[9.5px]" /><I n="rbar" /><Dd w="w-[9.5px]" />
      <I n="xbox" /><Dd w="w-[9.5px]" /><I n="err" /><Dd w="w-[9.5px]" /><I n="area" /><Dd w="w-[9.5px]" /><I n="box0" /><Dd w="w-[9.5px]" />
      <I n="candle" /><Dd w="w-[9.5px]" /><I n="cube" />
      <End c="ml-auto w-[13px]" />
    </Bar>
    <Bar c="ml-[44px]">
      <div className="w-[8px]" />
      <I n="gbar" /><Dd />
      <I n="glayer" c="ml-[9px]" /><Dd />
      <I n="gdia" c="ml-[4px]" /><Dd />
      <I n="gmat" /><Dd />
      <I n="gmat2" c="ml-[1px]" /><Dd />
      <I n="gsq" c="ml-[4px]" />
      <End c="w-[6px]" />
    </Bar>
    <Bar c="ml-[7px]">
      <Grip />
      <I n="face" /><I n="facex" />
      <Sep c="w-[9px]" />
      <I n="shield" /><I n="ddots" /><I n="rdots" />
      <Sep c="w-[8px]" />
      <I n="bdots" />
      <End c="w-[10px]" />
    </Bar>
    <Bar c="ml-[5px]">
      <Grip />
      <I n="a1" /><I n="a2" /><I n="a3" /><I n="a4" /><I n="trap" /><I n="trapd" /><I n="trap" /><I n="layers" /><I n="fit" /><I n="flip" /><I n="cube2" />
      <Combo off c="ml-[7px] w-[74px]"><span className="pl-[1px]">10</span></Combo>
      <End c="w-[15px]" />
    </Bar>
  </div>
);

const R = ({ children, h = 'h-[22px]' }: { children: React.ReactNode; h?: string }) => (
  <div className={`flex shrink-0 items-center justify-center ${h}`}>
    <svg viewBox="0 0 16 16" className="h-[17px] w-[17px]" fill="none" stroke="#222">{children}</svg>
  </div>
);

const RSep = () => (
  <div className="flex h-[8px] shrink-0 items-center px-[3px]"><div className="h-px w-full bg-[#c4c6d4]" /></div>
);

const RGrip = () => <div className="mx-auto h-[7px] w-[14px] border-t-2 border-dotted border-[#8f8f9a]" />;

const REnd = () => (
  <div className="mt-auto flex h-[16px] items-center justify-end bg-[#d4d6e6] pr-[3px]">
    <svg viewBox="0 0 8 8" className="h-[8px] w-[8px]"><path d="M0 1h1.500v6H0z M3 0l5 4-5 4z" fill="#333" /></svg>
  </div>
);

const dim = '#6a6a72';

const RightBar = () => (
  <div className="flex w-[26px] shrink-0 flex-col rounded-sm">
    <div className="flex h-[393px] flex-col rounded-[3px] bg-linear-to-r from-[#fbfbfe] via-[#e8e9f2] to-[#b3b7cf] pt-[2px]">
      <RGrip />
      <R><path d="M1 10h4v3H1zM5 7h4v3H5zM9 4h4v3H9zM1 4h4v2H1zM9 10h5v2H9z" fill="#111" stroke="none" /></R>
      <R><path d="M3 2v11h11M3 13l8-8" stroke="#c22" /><path d="M1 4l2-3 2 3M12 11l3 2-3 2" stroke="#c22" /></R>
      <R><path d="M3 2v11h11" stroke="#222" /><path d="M3 13l8-8" stroke="#222" /><path d="M12 11l3 2-3 2" stroke="#c22" /></R>
      <R><path d="M3 2v11h11M3 13l8-8" stroke="#222" /><path d="M1 4l2-3 2 3" stroke="#c22" /></R>
      <R><path d="M4 3c2-2 6-2 8 0M12 13c-2 2-6 2-8 0" /><path d="M2 6l4 5M6 6l-4 5M10 6l2 2 2-2M12 8v3" strokeWidth="1.300" /></R>
      <div className="flex h-[22px] shrink-0 items-center justify-center border border-[#3c8cc0] bg-[#dfeefa]">
        <svg viewBox="0 0 16 16" className="h-[17px] w-[17px]" fill="none" stroke="#111">
          <path d="M2 1v13h13" strokeDasharray="1 1" />
          <circle cx="10" cy="3" r="1.300" fill="#111" />
          <path d="M9 5L6 8l3 2-2 3M9 5l3 3M6 8H4" strokeWidth="1.500" />
        </svg>
      </div>
      <div className="h-[8px]" />
      <R><path d="M1 1h14v14H1zM1 7h14M4 3v3h4M4 10v3h4M10 10v3h3" /></R>
      <R><path d="M1 2h14v5H1zM1 9h6v5H1zM9 9h6v5H9zM3 3v2h3M9 3v2h3" strokeWidth=".9" /></R>
      <R><path d="M1 2h6v5H1zM9 2h6v5H9zM1 9h14v5H1zM3 10v2h3M9 10v2h3" strokeWidth=".9" /></R>
      <R><path d="M1 2h14v5H1zM3 9h12v5H3z" strokeWidth=".9" /><path d="M2 5l4-2 3 2 4-2" stroke="#a33" strokeWidth=".8" /><path d="M5 10l3 3 3-3" stroke="#226" strokeWidth=".8" /></R>
      <RSep />
      <R><path d="M3 1v13h12" /><path d="M3 14h12" strokeDasharray="1 1" /></R>
      <R><path d="M3 3h11" stroke="#222" /><path d="M3 3v11h11V3" stroke={dim} strokeDasharray="1 1" /></R>
      <R><path d="M13 2v12" stroke="#222" /><path d="M13 14H3V2" stroke={dim} strokeDasharray="1 1" /></R>
      <R><path d="M2 2h12v12H2z" strokeDasharray="2 1" stroke="#333" /></R>
      <R><path d="M3 2v12h11" stroke={dim} strokeDasharray="1 1" /><path d="M8 3v4h5" /></R>
      <R><path d="M3 2v12h11" stroke={dim} strokeDasharray="1 1" /><path d="M8 3v4h3" /><path d="M11 3l2 4" stroke="#c22" /></R>
      <REnd />
    </div>
    <div className="mt-[1px] flex h-[422px] flex-col rounded-[3px] bg-linear-to-r from-[#fbfbfe] via-[#e8e9f2] to-[#b3b7cf] pt-[2px]">
      <RGrip />
      <R><path d="M2 1v14" stroke={dim} strokeDasharray="1 1" /><path d="M4 2h8v4H4zM4 9h11v5H4z" stroke={dim} /></R>
      <R><path d="M14 1v14" stroke={dim} strokeDasharray="1 1" /><path d="M6 2h6v4H6zM2 9h10v5H2z" stroke={dim} /></R>
      <RSep />
      <R><path d="M1 2h14" stroke={dim} strokeDasharray="1 1" /><path d="M2 3h5v11H2zM9 3h5v5H9z" stroke={dim} /></R>
      <R><path d="M1 14h14" stroke={dim} strokeDasharray="1 1" /><path d="M2 2h5v11H2zM9 7h5v6H9z" stroke={dim} /></R>
      <RSep />
      <R><path d="M3 4h10v4H3zM5 9h6v4H5zM8 1v14" stroke={dim} /></R>
      <R><path d="M1 8h14M4 3h4v10H4zM9 5h4v6H9z" stroke={dim} /></R>
      <RSep />
      <R><path d="M1 2v12M15 2v12" stroke={dim} strokeDasharray="1 1" /><path d="M4 2h8v5H4zM6 9h8v5H6z" stroke={dim} /></R>
      <R><path d="M1 1h14M1 15h14" stroke={dim} strokeDasharray="1 1" /><path d="M3 3h4v11H3zM9 5h4v9H9z" stroke={dim} /></R>
      <RSep />
      <R><path d="M2 4h3v8H2zM7 2h3v12H7zM12 6h3v4h-3z" stroke={dim} /></R>
      <R><path d="M6 1h4v3H6zM3 6h10v3H3zM5 11h6v3H5z" stroke={dim} /></R>
      <R><path d="M1 1h9v9H1z" stroke={dim} fill="#b8b8c4" /><path d="M6 6h9v9H6z" stroke={dim} fill="#e8e9f2" /></R>
      <R><path d="M1 1h7v7H1z" stroke={dim} fill="#8f8f9a" /><path d="M7 7h8v8H7z" stroke={dim} /></R>
      <RSep />
      <R><path d="M4 4h8v8H4z" stroke={dim} /><path d="M1 2v12M15 2v12" stroke={dim} strokeDasharray="1 2" /></R>
      <R><path d="M4 4h8v8H4z" stroke={dim} /><path d="M1 2v12M15 2v12M6 6l4 4M10 6l-4 4" stroke={dim} strokeDasharray="1 1" /></R>
      <RSep />
      <R><path d="M2 2h9v9H2z" stroke={dim} /><path d="M6 6h8v8H6z" stroke={dim} /><path d="M1 1h2v2H1zM11 1h2v2h-2zM1 11h2v2H1zM13 13h2v2h-2z" fill="#333" stroke="none" /></R>
      <R><path d="M3 3h8v8H3z" stroke={dim} /><path d="M6 7h8v7H6z" stroke={dim} /><path d="M1 1h3v3H1zM10 1h3v3h-3zM1 10h3v3H1zM13 13h2v2h-2z" fill="#556" stroke="none" /></R>
      <REnd />
    </div>
  </div>
);

const AppItem = ({ icon, lines, c = '' }: { icon: React.ReactNode; lines: string[]; c?: string }) => (
  <div className={`flex h-[94px] shrink-0 flex-col items-center ${c}`}>
    <div className="h-[40px] w-[40px] shrink-0">{icon}</div>
    <div className="mt-[4px] text-center text-[15.4px] leading-[19.5px] whitespace-nowrap">
      {lines.map((l) => <div key={l}>{l}</div>)}
    </div>
  </div>
);

const Box = ({ children }: { children: React.ReactNode }) => (
  <svg viewBox="0 0 40 40" className="h-[40px] w-[40px]" fill="none">{children}</svg>
);

const Apps = () => (
  <div className="relative ml-[5px] flex min-w-0 flex-1 flex-col">
    <div className="flex h-[29px] shrink-0 items-center bg-linear-to-r from-[#dce4f0] to-[#eef2f9] pl-[4px] text-[14px] text-[#333] font-['Noto_Sans',sans-serif]">Apps</div>
    <div className="flex min-h-0 flex-1">
      <div className="relative w-[29px] shrink-0 bg-[#f0f0f2]">
        {['top-[7px]', 'top-[23px]', 'top-[39px]', 'top-[55px]'].map((t, i) => (
          <svg key={t} viewBox="0 0 8 7" className={`absolute left-[11px] h-[7px] w-[8px] ${t}`}>
            {i === 0 && <path d="M0 0h8v1H0z" fill="#222" />}
            <path d={i < 2 ? 'M4 1l4 5H0z' : 'M0 1h8L4 6z'} fill="#222" />
            {i === 3 && <path d="M0 6h8v1H0z" fill="#222" />}
          </svg>
        ))}
        <svg viewBox="0 0 29 125" className="absolute top-[66px] left-0 h-[125px] w-[29px]" fill="none" stroke="#666">
          <path d="M29 2L4 15v30l25 14" fill="#fff" />
          <path d="M23 56L4 66v38l25 14" />
        </svg>
        <div className="absolute top-[81px] left-[9px] text-[15px] leading-[15px] font-bold text-[#111] [text-orientation:sideways] [writing-mode:vertical-rl] font-['Noto_Sans_CJK_SC',sans-serif]">所有</div>
        <div className="absolute top-[123px] left-[9px] text-[15px] leading-[15px] text-[#333] [text-orientation:sideways] [writing-mode:vertical-rl] font-['Noto_Sans_CJK_SC',sans-serif]">连接器</div>
      </div>
      <div className="flex min-w-0 flex-1 flex-col border-b border-l border-[#999] bg-white pt-[5px] pl-[4px] text-[#222] font-['Noto_Sans','Noto_Sans_CJK_SC',sans-serif]">
        <AppItem lines={['添加App']} icon={
          <Box>
            <path d="M1 1h34v33H1z" fill="#e8f0f6" stroke="#5a9cc8" />
            <path d="M1 1h34v5H1z" fill="#3c8cc0" />
            <path d="M5 9h11v16H5z" fill="#b0b0b0" />
            <path d="M19 9h13v5H19zM5 28h12v3H5z" fill="#c8d0d6" />
            <circle cx="29" cy="28" r="11" fill="#d83030" stroke="#f0a0a0" />
            <path d="M29 21v14M22 28h14" stroke="#fff" strokeWidth="4" />
          </Box>
        } />
        <AppItem lines={['Graph', 'Maker']} icon={
          <Box>
            {[2, 6, 10, 14].map((x, i) => (
              <path key={x} d={`M${x} 1v17`} stroke={['#5050a0', '#b03a6a', '#3a9a5a', '#3a6ab0'][i]} strokeWidth="2" strokeDasharray="2 2" />
            ))}
            <path d="M2 33L21 18c-2-8 6-13 12-9l-6 5 2 4 6-2c1 8-7 12-13 9L7 38z" fill="#8f8f10" />
            <path d="M22 30h5v9h-5z" fill="#8a1010" />
            <path d="M29 24h5v15h-5z" fill="#c0b010" />
            <path d="M35 18h5v21h-5z" fill="#101080" />
          </Box>
        } />
        <AppItem lines={['Send', 'Graphs to...']} icon={
          <Box>
            <path d="M14 8L30 1v33l-16-2z" fill="#fff" stroke="#eca090" />
            <path d="M30 4h10v26H30z" fill="#fff" stroke="#eca090" />
            <text x="17" y="23" fontFamily="Liberation Sans, sans-serif" fontSize="13" fill="#d8806c">P</text>
            <circle cx="35" cy="10" r="2.500" fill="#d8806c" />
            <path d="M31 17h8M31 21h8M31 25h8" stroke="#d8806c" />
            <path d="M-1 30h8v-3l8 5-8 5v-3h-8z" fill="#c84a2a" />
          </Box>
        } />
        <AppItem lines={['Send', 'Graphs ...']} icon={
          <Box>
            <path d="M12 8L28 1v33l-16-2z" fill="#fff" stroke="#224" />
            <path d="M28 4h10v26H28z" fill="#fff" stroke="#224" />
            <text x="13" y="22" fontFamily="Liberation Sans, sans-serif" fontSize="12" fontWeight="700" fill="#1a3ab0">W</text>
            <path d="M30 10h6M30 15h6M30 20h6M30 25h6" stroke="#334" />
            <path d="M0 29h9v-3l7 5-7 5v-3H0z" fill="#0a1ac8" />
          </Box>
        } />
        <AppItem c="text-[#7a7a7a]" lines={['Sequential', 'Fit']} icon={
          <Box>
            <path d="M1 24c6 0 6-4 9-12 2-8 3-11 5-11 2 0 3 8 5 14 1 4 3 16 7 22 3 2 8 2 11 2" stroke="#ecd6ea" strokeWidth="2" />
            <path d="M8 30c6-2 7-12 11-20 2-3 3 2 5 8 2 8 5 18 8 19" stroke="#e8cce6" strokeWidth="2" />
          </Box>
        } />
        <AppItem lines={['Simple Fit']} icon={
          <Box>
            <path d="M0 0h40v40H0z" fill="#1450c8" />
            <path d="M3 38h34M3 38V3" stroke="#cfe6ff" strokeWidth="2" />
            <path d="M4 33l10-1c10-2 16-8 21-28" stroke="#a02090" strokeWidth="4" />
            <g fill="#fff"><circle cx="9" cy="34" r="2" /><circle cx="17" cy="33" r="2" /><circle cx="24" cy="30" r="2" /><circle cx="28" cy="23" r="2" /><circle cx="34" cy="16" r="2" /><circle cx="36" cy="6" r="2" /></g>
          </Box>
        } />
        <AppItem lines={['Stats', 'Advisor']} icon={
          <Box>
            <path d="M17 0l4 9 11 3-8 8 2 11-9-5-11 2 4-10-9-7 11-1z" fill="#e3bb2a" />
            <path d="M20 20l18 19" stroke="#444" strokeWidth="2" />
            <path d="M27 4l1 2 2 1-2 1-1 2-1-2-2-1 2-1zM3 28l1 2 2 1-2 1-1 2-1-2-2-1 2-1z" fill="#ecd890" />
          </Box>
        } />
      </div>
    </div>
  </div>
);

const Status = () => (
  <div className="flex h-[25px] shrink-0 items-center whitespace-nowrap bg-[#f4f4f6] text-[13px] text-[#333] font-['Noto_Sans','Noto_Sans_CJK_SC',sans-serif]">
    <span className="ml-[1255px] w-[14px] border-r border-[#ccc]">--</span>
    <span className="w-[22px] border-r border-transparent pl-[7px]">
      <svg viewBox="0 0 10 10" className="h-[10px] w-[10px]"><path d="M1 0h8v6H2v4H1z" fill="#d01010" /></svg>
    </span>
    <span className="ml-[7px] w-[46px] border-r border-[#ccc]">AU : 开</span>
    <span className="w-[73px] border-r border-[#ccc] pl-[5px]">Light Grids</span>
    <span className="w-[283px] border-r border-[#ccc] pl-[3px] tracking-[-.5px]">1:[Book1]Sheet1!Col("Smoothed Y1")[1:3654]</span>
    <span className="pl-[4px]">1:[G</span>
  </div>
);

const T = ({ children }: { children: React.ReactNode }) => (
  <svg viewBox="0 0 24 24" className="h-[24px] w-[24px]" fill="none">{children}</svg>
);

const tasks: { key: string; on: boolean; icon: React.ReactNode }[] = [
  { key: 'files', on: true, icon: <T><path d="M4 3h16v5H4z" fill="#f0c030" /><path d="M4 8h16v14H4z" fill="#f4d878" /><path d="M9 14h6v8H9z" fill="#3a6ea8" /></T> },
  { key: 'snip', on: false, icon: <T><path d="M4 10c0-7 14-9 16-3 1 6-7 9-12 8z" stroke="#e08a8a" strokeWidth="2" /><path d="M11 14l5 8M17 12l-3 9" stroke="#4a80c0" strokeWidth="1.500" /></T> },
  { key: 'map', on: false, icon: <T><path d="M3 3h18v18H3z" fill="#0a6ec0" /><path d="M8 9l8-1v6l-8 1z" fill="#8cc83c" /></T> },
  { key: 'chrome', on: false, icon: <T><circle cx="12" cy="12" r="10" fill="#e8b820" /><path d="M3 8a10 10 0 0 1 18 0h-9z" fill="#d83a2a" /><path d="M3 8a10 10 0 0 0 8 14l4-7z" fill="#3a9a4a" /><circle cx="12" cy="12" r="5" fill="#fff" /><circle cx="12" cy="12" r="3.500" fill="#3a78d8" /></T> },
  { key: 'bird', on: true, icon: <T><path d="M3 5a3 3 0 0 1 3-3h12a3 3 0 0 1 3 3v14a3 3 0 0 1-3 3H6a3 3 0 0 1-3-3z" fill="#4a9ae8" /><path d="M7 9l5 3 5-4-3 8-3-2z" fill="#fff" /></T> },
  { key: 'edge', on: true, icon: <T><path d="M22 14C22 6 17 2 12 2 6 2 2 6 2 12c0 6 5 10 10 10 3 0 6-1 8-3-5 2-10 0-10-4 0-3 6-4 12-1z" fill="#1a80c8" /><path d="M2 12c1-4 5-6 9-5 4 0 6 3 6 5-4-1-9 0-9 4-3-1-5-2-6-4z" fill="#30c0a0" /></T> },
  { key: 'light', on: true, icon: <T><path d="M8 3c2 6 1 12-2 18M15 3c-1 6 0 12 3 18M5 21h14M11 10h3" stroke="#333" /></T> },
  { key: 'en', on: true, icon: <T><path d="M4 2h16v20H4z" fill="#fff" stroke="#ddd" /><text x="6" y="16" fontFamily="Liberation Sans, sans-serif" fontSize="9" fontWeight="700" fill="#6040c0">EN</text><path d="M19 16l-5 6h6z" fill="#223" /></T> },
  { key: 'wps', on: true, icon: <T><path d="M2 4h20l-4 17h-4l-2-7-2 7H6z" fill="#d83030" /><path d="M7 8l2 7 3-7 3 7 2-7z" fill="#f6e0c8" /></T> },
  { key: 'pad', on: true, icon: <T><path d="M6 6l11-3 2 17-11 1z" fill="#a8cfe0" stroke="#6a9ab8" /><path d="M6 6l3 15" stroke="#e8f0f4" /></T> },
  { key: 'wps2', on: true, icon: <T><path d="M2 4h20l-4 17h-4l-2-7-2 7H6z" fill="#d83030" /><path d="M7 8l2 7 3-7 3 7 2-7z" fill="#f6e0c8" /></T> },
  { key: 'wechat', on: true, icon: <T><path d="M4 10c0-5 12-6 12 0 0 5-6 6-9 5l-2 2v-3c-1-1-1-2-1-4z" fill="#30c050" /><circle cx="17" cy="17" r="1.500" fill="#aac" /></T> },
  { key: 'glass', on: true, icon: <T><circle cx="11" cy="11" r="9" fill="#bcd8e8" stroke="#446" strokeWidth="1.500" /><path d="M6 11l5-4 5 4-5 4z" fill="#3a8a6a" /><path d="M17 17l5 5" stroke="#c8a040" strokeWidth="3" /></T> },
  { key: 'zy', on: true, icon: <T><path d="M2 3h20v18H2z" fill="#d86830" /><text x="3" y="17" fontFamily="Liberation Sans, sans-serif" fontSize="12" fontWeight="700" fill="#fff" stroke="#222" strokeWidth=".6">ZY</text></T> },
  { key: 'word', on: true, icon: <T><path d="M3 3h18v18H3z" fill="#1a5cb8" /><text x="5.500" y="17" fontFamily="Liberation Sans, sans-serif" fontSize="13" fontWeight="700" fill="#fff">W</text></T> },
];

const Task = () => (
  <div className="flex h-[38px] shrink-0">
    <div className="flex w-[174px] shrink-0 items-center bg-white pl-[3px] text-[15px] text-[#333] font-['Noto_Sans_CJK_SC',sans-serif]">
      <svg viewBox="0 0 24 24" className="h-[26px] w-[26px]" fill="none">
        <path d="M5 14h16c1-9-6-13-12-10C4 7 3 12 4 16c2 6 11 7 16 2h-5c-3 2-6 0-7-2z" fill="#3a8ae0" />
        <path d="M8 11c0-5 8-5 9 0z" fill="#fff" />
        <path d="M2 22C0 18 8 4 22 2" stroke="#3a8ae0" strokeWidth="1.500" />
      </svg>
      <svg viewBox="0 0 6 5" className="mr-[6px] ml-[3px] h-[5px] w-[6px]"><path d="M3 0l3 5H0z" fill="#999" /></svg>
      传奇网页
    </div>
    <div className="flex w-[70px] shrink-0 items-center justify-center bg-[#2d8cf0] text-[15px] text-white font-['Noto_Sans_CJK_SC',sans-serif]">搜索一下</div>
    <div className="flex min-w-0 flex-1 bg-linear-to-r from-[#c7e7e7] via-[#f3f3f1] via-55% to-[#c8e8e8] pl-[5px]">
      {tasks.map((t) => (
        <div key={t.key} className="flex h-full w-[46px] shrink-0 flex-col items-center">
          <div className="flex flex-1 items-center justify-center">{t.icon}</div>
          <div className={`h-[3px] w-[35px] ${t.on ? 'bg-[#1a7cc8]' : ''}`} />
        </div>
      ))}
      <div className="flex h-full w-[45px] shrink-0 flex-col bg-[#f8f6f6]">
        <div className="flex flex-1 items-center justify-center">
          <T><path d="M4 2h16v20H4z" fill="#e8ecf0" stroke="#ccc" /><circle cx="12" cy="13" r="7" fill="#e89080" /><path d="M7 16c1-6 2-8 3-4 1-5 3-5 4 1 1-3 2-2 3 3" stroke="#fff" strokeWidth="1.200" /></T>
        </div>
        <div className="h-[3px] bg-[#1a7cc8]" />
      </div>
      <div className="ml-[450px] flex h-full shrink-0 items-center pb-[2px]">
        <svg viewBox="0 0 14 8" className="ml-[7px] h-[8px] w-[14px]" fill="none"><path d="M1 7l6-6 6 6" stroke="#222" /></svg>
        <svg viewBox="0 0 12 22" className="ml-[16px] h-[22px] w-[12px]" fill="none"><rect x="3" y="0" width="6" height="14" rx="3" fill="#222" /><path d="M1 10c0 7 10 7 10 0M6 16v5M3 21h6" stroke="#222" /></svg>
        <svg viewBox="0 0 16 14" className="ml-[16px] h-[14px] w-[16px]"><path d="M0 1h16l-3 12h-2L8 6l-3 7H3z" fill="#d83030" /></svg>
        <svg viewBox="0 0 20 20" className="ml-[13px] h-[20px] w-[20px]" fill="none"><path d="M2 2h12v16H2z" stroke="#444" strokeWidth="1.500" /><path d="M5 11c0-4 5-4 6-1M11 10l-2 0M11 10V8" stroke="#444" /><circle cx="15" cy="15" r="4" fill="#3a7ac0" /></svg>
        <svg viewBox="0 0 20 20" className="ml-[10px] h-[20px] w-[20px]"><circle cx="10" cy="10" r="9" fill="#e8c820" /><circle cx="10" cy="10" r="6" fill="#30b050" /><path d="M10 6v8M6 10h8" stroke="#fff" strokeWidth="2" /></svg>
        <svg viewBox="0 0 18 14" className="ml-[11px] h-[14px] w-[18px]" fill="none"><path d="M4 3h13v9H4z" stroke="#333" /><path d="M1 1h3v5H1z" fill="#333" /></svg>
        <svg viewBox="0 0 18 18" className="ml-[12px] h-[18px] w-[18px]" fill="none" stroke="#888"><path d="M1 16C2 8 8 2 17 1M5 16c1-5 5-9 12-10M9 16c1-3 3-5 8-6" /><circle cx="13" cy="15" r="1.500" fill="#888" /></svg>
        <svg viewBox="0 0 18 18" className="ml-[9px] h-[18px] w-[18px]" fill="none" stroke="#555"><path d="M2 6h4l4-4v14l-4-4H2z" /><path d="M13 5c2 2 2 6 0 8" stroke="#aaa" /></svg>
        <span className="ml-[11px] text-[19px] text-[#222] font-['Noto_Sans_CJK_SC',sans-serif]">英</span>
        <span className="ml-[17px] text-[14px] text-[#222] font-['Noto_Sans',sans-serif]">0:</span>
      </div>
    </div>
  </div>
);

export default function App() {
  return (
    <div className="relative flex h-[1080px] w-[1728px] flex-col overflow-hidden bg-[#eff2fb] font-['Noto_Sans_CJK_SC',sans-serif]">
      <div className="flex h-[29px] shrink-0 items-center whitespace-nowrap bg-white text-[15.65px] text-[#222] font-['Noto_Sans','Noto_Sans_CJK_SC',sans-serif]">
        <span className="-ml-[5px]">UiO-66-NH2--XRD图.opju * - D:\Origin2019\项目\ - /Folder1/ - OriginPro 2019b 64-bit - [Graph8 *]</span>
        <div className="mr-[47px] ml-auto h-px w-[12px] bg-[#222]" />
      </div>
      <Top />
      <div className="flex min-h-0 flex-1">
        <div className="flex w-[1577px] shrink-0 flex-col">
          <div className="flex border-t-2 border-[#85858c]">
            <Canvas />
            <div className="flex-1 bg-[#bfbdc0]" />
          </div>
          <BottomBar />
        </div>
        <div className="mt-0 w-px bg-[#eff2fb]" />
        <RightBar />
        <Apps />
      </div>
      <Status />
      <Task />
      <div className="absolute top-[383px] left-[1622px] flex h-[45px] w-[45px] items-center justify-center rounded-full border-[3px] border-[#dcecfb] bg-linear-to-br from-[#3f97f2] to-[#7cc0fa] text-[14px] text-[#d8ecff] font-['Noto_Sans',sans-serif]">03:10</div>
    </div>
  );
}
